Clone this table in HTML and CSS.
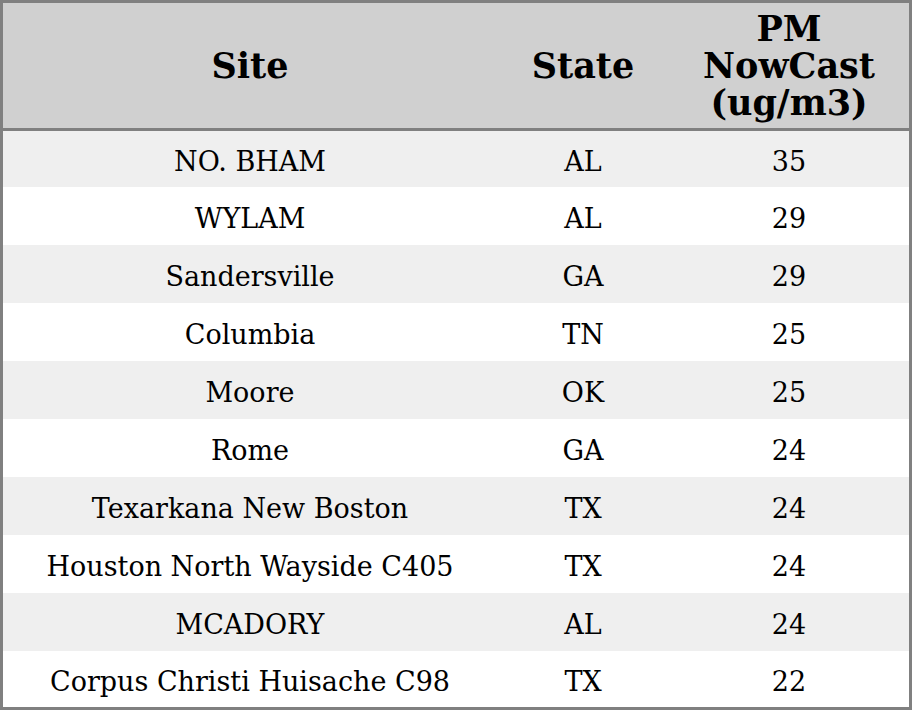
FILE: index.html
```html
<!DOCTYPE html>
<html>
<head>
<meta charset="utf-8">
<link rel="stylesheet" href="styles.css">
</head>
<body>
<table class="aq">
<thead>
<tr><th class="c-site">Site</th><th class="c-state">State</th><th class="c-pm">PM<br>NowCast<br>(ug/m3)</th></tr>
</thead>
<tbody>
<tr><td>NO. BHAM</td><td>AL</td><td>35</td></tr>
<tr><td>WYLAM</td><td>AL</td><td>29</td></tr>
<tr><td>Sandersville</td><td>GA</td><td>29</td></tr>
<tr><td>Columbia</td><td>TN</td><td>25</td></tr>
<tr><td>Moore</td><td>OK</td><td>25</td></tr>
<tr><td>Rome</td><td>GA</td><td>24</td></tr>
<tr><td>Texarkana New Boston</td><td>TX</td><td>24</td></tr>
<tr><td>Houston North Wayside C405</td><td>TX</td><td>24</td></tr>
<tr><td>MCADORY</td><td>AL</td><td>24</td></tr>
<tr><td>Corpus Christi Huisache C98</td><td>TX</td><td>22</td></tr>
</tbody>
</table>
</body>
</html>
```
FILE: styles.css
```css
html, body { margin: 0; padding: 0; background: #fff; }
.aq {
  width: 912px;
  border-collapse: collapse;
  border: 3px solid #808080;
  font-family: "DejaVu Serif", serif;
  color: #000;
}
.aq th {
  background: #d0d0d0;
  font-size: 35px;
  line-height: 37px;
  font-weight: bold;
  height: 125px;
  padding: 0;
  border-bottom: 3px solid #808080;
  text-align: center;
}
.c-site { width: 494px; }
.c-state { width: 172px; }
.c-pm { width: 240px; }
.aq td {
  font-size: 27px;
  line-height: 32px;
  height: 53px;
  padding: 5px 0 0;
  text-align: center;
  vertical-align: middle;
}
.aq tbody tr:first-child td,
.aq tbody tr:last-child td { height: 51px; }
.aq tbody tr:nth-child(odd) td { background: #efefef; }
.aq tbody tr:nth-child(even) td { background: #fff; }
```
